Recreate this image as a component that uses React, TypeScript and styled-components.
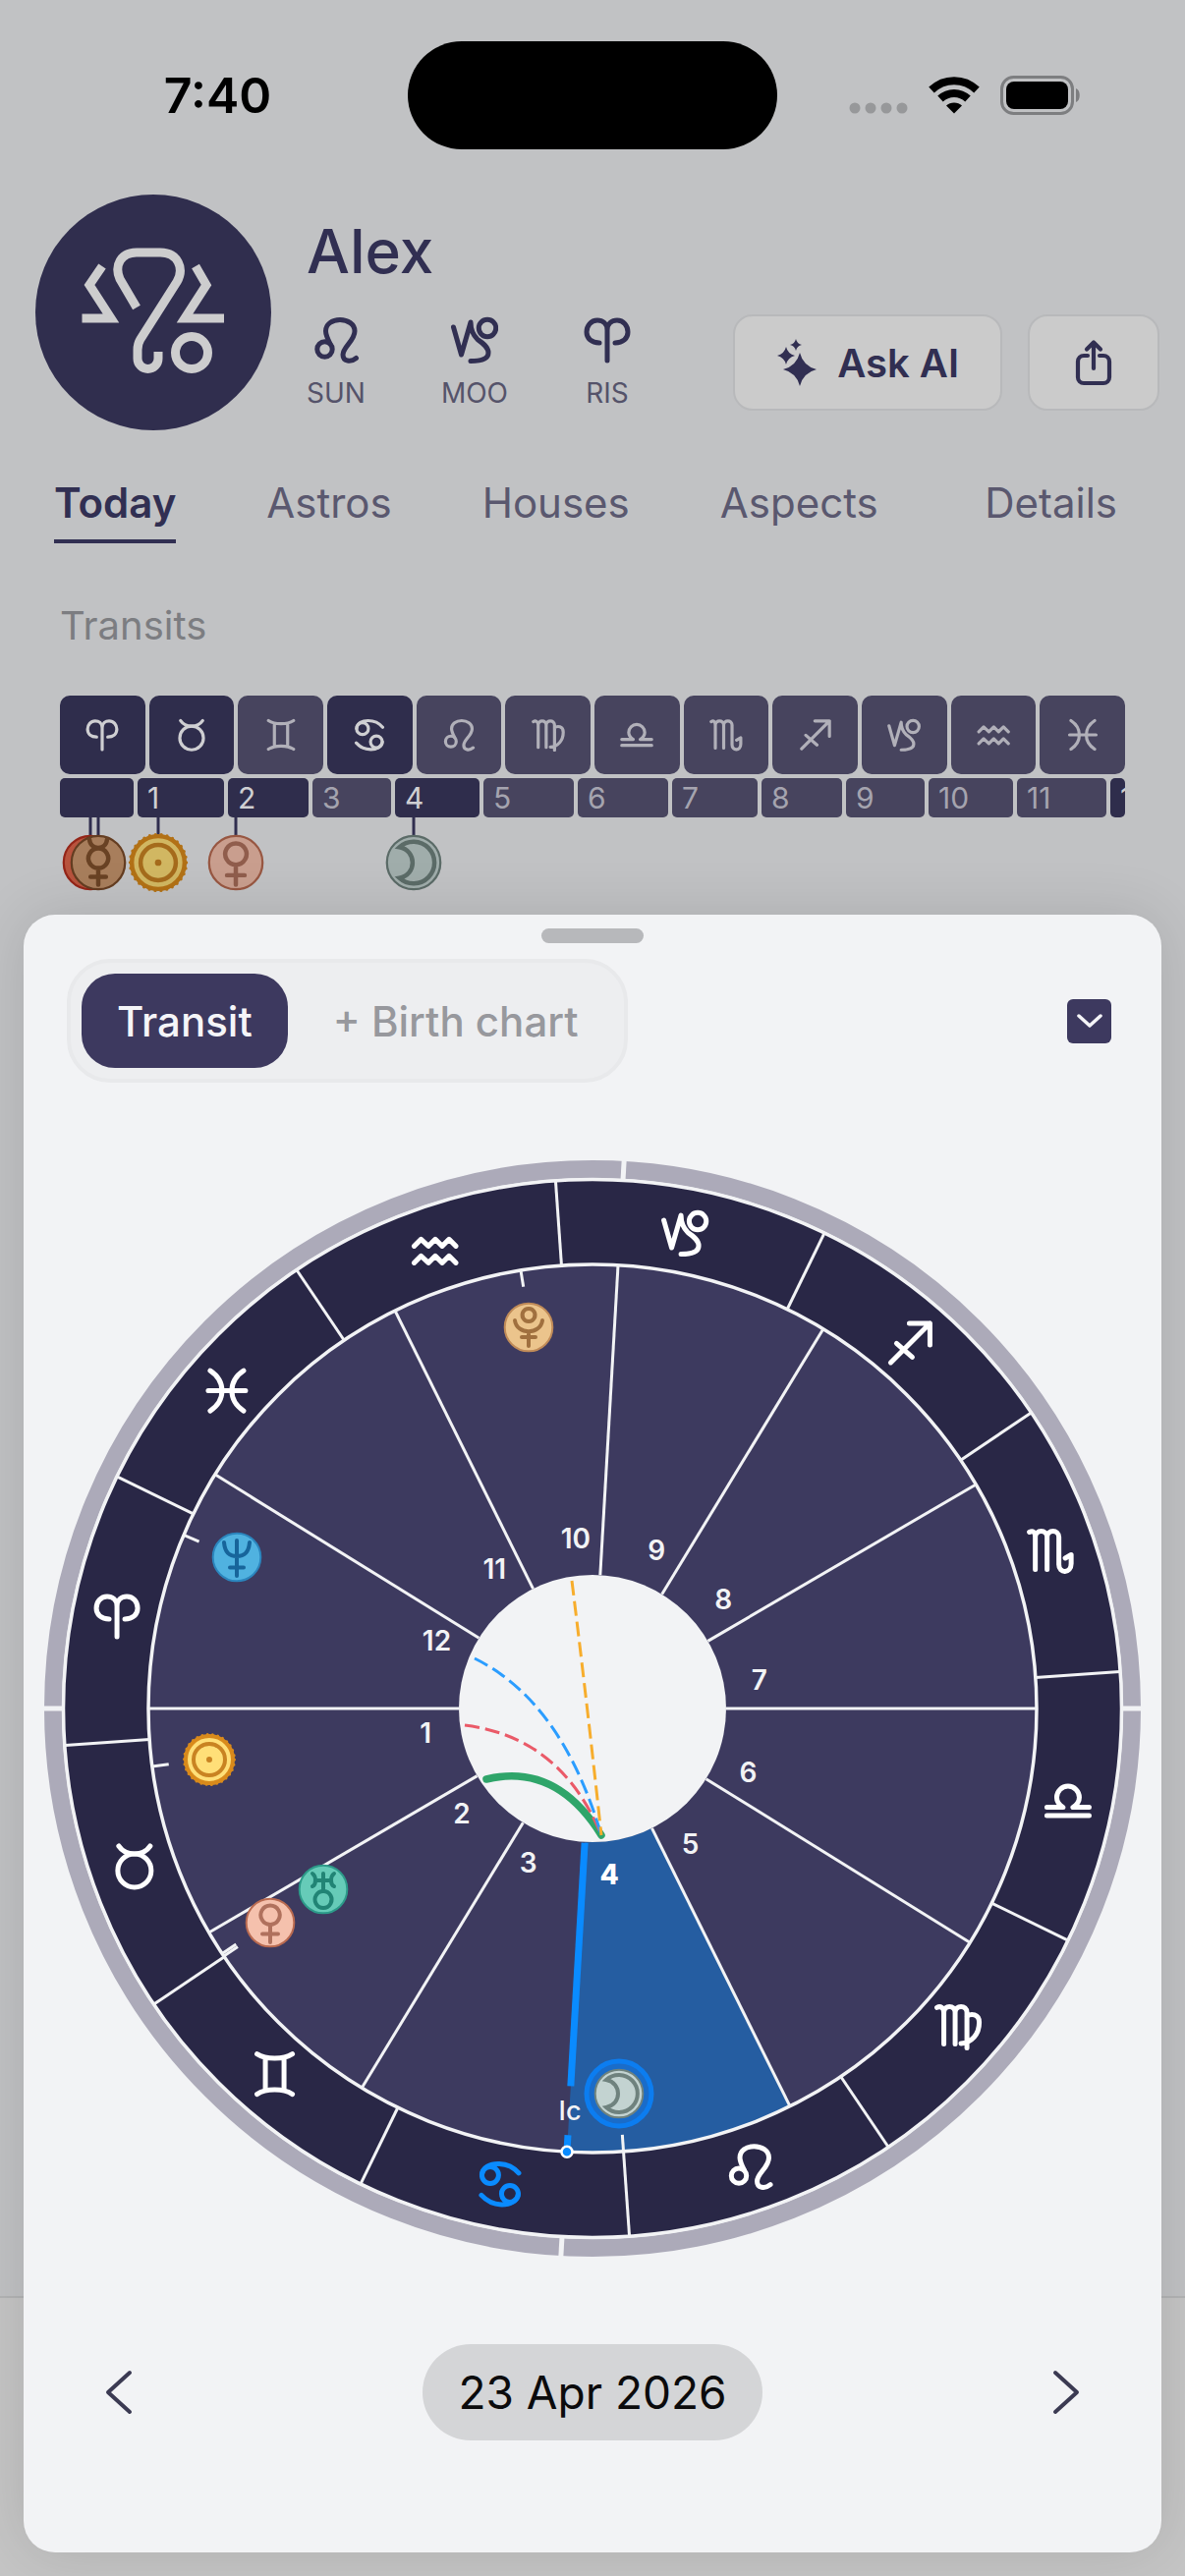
import React from 'react';
import styled, { createGlobalStyle } from 'styled-components';

const GlobalStyle = createGlobalStyle`
  *, *::before, *::after { box-sizing: border-box; }
  body {
    margin: 0;
    background: #c1c2c4;
    font-family: Inter, "Liberation Sans", sans-serif;
    color: #312f52;
  }
  button {
    font: inherit;
    color: inherit;
    margin: 0;
    padding: 0;
    border: 0;
    background: none;
    cursor: pointer;
  }
  svg { display: block; }
`;

/* ---------- zodiac glyphs, drawn in a 48 unit box ---------- */

type Sign =
  | 'aries' | 'taurus' | 'gemini' | 'cancer' | 'leo' | 'virgo'
  | 'libra' | 'scorpio' | 'sagittarius' | 'capricorn' | 'aquarius' | 'pisces';

const SIGNS: Sign[] = [
  'aries', 'taurus', 'gemini', 'cancer', 'leo', 'virgo',
  'libra', 'scorpio', 'sagittarius', 'capricorn', 'aquarius', 'pisces',
];

const GLYPHS: Record<Sign, React.ReactNode> = {
  aries: (
    <path d="M24 45V14C24 7 19 4 14 4 7.500 4 3 9.500 3 16c0 6.500 5 11 13 11M24 14C24 7 29 4 34 4c6.500 0 11 5.500 11 12 0 6.500-5 11-13 11" />
  ),
  taurus: (
    <>
      <circle cx="24" cy="28.500" r="17" />
      <path d="M8 3.500C12 9.500 17 11.500 24 11.500S36 9.500 40 3.500" />
    </>
  ),
  gemini: (
    <path d="M6 3.500C12 7.500 18 8 24 8S36 7.500 42 3.500M6 44.500C12 40.500 18 40 24 40S36 40.500 42 44.500M14.500 8V40M33.500 8V40" />
  ),
  cancer: (
    <>
      <circle cx="14" cy="15" r="8.500" />
      <circle cx="34" cy="34" r="8.500" />
      <path d="M5.500 15C6 7 14 3.500 22 3.500 31 3.500 38 7 43 13M42.500 34C42 41 34 45 26 45 17 45 10 41 5 35.500" />
    </>
  ),
  leo: (
    <>
      <circle cx="12.500" cy="33.500" r="7.700" />
      <path d="M18 28C15.500 23 13.500 19 13.500 15 13.500 8 20 3.500 28 3.500S43 8 43 15C43 25 31 31 31 39 31 46 39 47 44.500 42.500" />
    </>
  ),
  virgo: (
    <path d="M2.500 5C6 3 9.500 5 9.500 10V42M9.500 10C9.500 2 21 2 21 10V42M21 10C21 2 33 2 33 10V46M33 14C37 10.500 45.500 11.500 45.500 20 45.500 32 38 40.500 27 41.500" />
  ),
  libra: (
    <path d="M2.500 39H45.500M2.500 30.500H19C15 28 12.500 25 12.500 20.500a11.500 11.500 0 0 1 23 0C35.500 25 33 28 29 30.500H45.500" />
  ),
  scorpio: (
    <path d="M2.500 5C6 3 8.500 5 8.500 10V43M8.500 10C8.500 2 20.500 2 20.500 10V43M20.500 10C20.500 2 32.500 2 32.500 10V38C32.500 47.500 45 47.500 45 37V28L39 31.500" />
  ),
  sagittarius: <path d="M4 44L44 4M23 4H44V26M10 24.500L26 38.500" />,
  capricorn: (
    <>
      <circle cx="37" cy="12" r="8.700" />
      <path d="M2.500 11L10.500 39L20 6C20 14 22.500 19 27 23.500 32 27 38 31 38 37 38 43 31 45.500 20 45.500" />
    </>
  ),
  aquarius: (
    <path d="M3 19.500L10 12.500L17.500 19.500L24.500 12.500L31.500 19.500L38.500 12.500L45.500 19.500M3 36.500L10 29.500L17.500 36.500L24.500 29.500L31.500 36.500L38.500 29.500L45.500 36.500" />
  ),
  pisces: <path d="M7 3.500C23 14 23 34 7 44.500M41 3.500C25 14 25 34 41 44.500M5 24H43" />,
};

function SignIcon({ sign, size, weight = 4.5 }: { sign: Sign; size: number; weight?: number }) {
  return (
    <svg
      width={size}
      height={size}
      viewBox="0 0 48 48"
      fill="none"
      stroke="currentColor"
      strokeWidth={weight}
      strokeLinecap="round"
      strokeLinejoin="round"
      aria-hidden="true"
    >
      {GLYPHS[sign]}
    </svg>
  );
}

/* ---------- planet medallions, centred on 0,0 with radius 25 ---------- */

type Planet = 'sun' | 'moon' | 'mercury' | 'venus' | 'mars' | 'uranus' | 'neptune' | 'pluto';

const PLANETS: Record<Planet, { fill: string; rim: string; ink: string; glyph: React.ReactNode }> = {
  sun: {
    fill: '#ffdf78', rim: '#d98a1b', ink: '#c98322',
    glyph: (
      <>
        <circle r="24" strokeWidth="4" stroke="#d98a1b" />
        <circle r="25.500" strokeWidth="3" stroke="#d98a1b" strokeDasharray="0 5.340" />
        <circle r="16" />
        <circle r="1.500" strokeWidth="3" />
      </>
    ),
  },
  moon: {
    fill: '#c3d3d1', rim: '#6f827e', ink: '#6f827e',
    glyph: <path d="M-13-14A19 19 0 1 1-13 14C3 11 3-11-13-14Z" />,
  },
  mercury: {
    fill: '#cd9a70', rim: '#7a4a28', ink: '#80502c',
    glyph: <path d="M-8-21C-7-11 7-11 8-21M0 5V20M-7 13H7M0-13a9 9 0 1 0 .1 0Z" />,
  },
  venus: {
    fill: '#f5c1ad', rim: '#b96a50', ink: '#b0715d',
    glyph: <path d="M0 2V20M-8 11.500H8M0-17.500a9.700 9.700 0 1 0 .1 0Z" />,
  },
  mars: { fill: '#e0654a', rim: '#b52d1d', ink: '#b52d1d', glyph: null },
  uranus: {
    fill: '#66cbb8', rim: '#2c9a89', ink: '#218475',
    glyph: <path d="M0 2a8.500 8.500 0 1 0 .1 0ZM0-16V2M-11-16C-7-13-7-5-11-3M11-16C7-13 7-5 11-3M-8-9H8" />,
  },
  neptune: {
    fill: '#50b2e0', rim: '#2b85bd', ink: '#17659b',
    glyph: <path d="M0-17V19M-7 10.500H7M-13-15C-12-3-6-1 0-1S12-3 13-15" />,
  },
  pluto: {
    fill: '#ebc48c', rim: '#c08b58', ink: '#a0703f',
    glyph: <path d="M0-19a6.500 6.500 0 1 0 .1 0ZM-14-7C-12 8 12 8 14-7M0 5V19M-7 10H7" />,
  },
};

function Medallion({ planet }: { planet: Planet }) {
  const p = PLANETS[planet];
  return (
    <g fill="none" stroke={p.ink} strokeWidth="4" strokeLinecap="round">
      <circle r="24.300" fill={p.fill} stroke={p.rim} strokeWidth="2" />
      {p.glyph}
    </g>
  );
}

/* ---------- screen behind the sheet ---------- */

const Screen = styled.div`
  position: relative;
  display: flex;
  flex-direction: column;
  min-height: 100vh;
  overflow: hidden;
`;

const StatusBar = styled.div`
  display: grid;
  grid-template-columns: 1fr 376px 1fr;
  align-items: center;
  height: 194px;
`;

const Clock = styled.time`
  padding-left: 28px;
  text-align: center;
  font-size: 50px;
  line-height: 60px;
  font-weight: 600;
  color: #000;
`;

const Island = styled.div`
  height: 110px;
  border-radius: 55px;
  background: #000;
`;

const StatusIcons = styled.div`
  display: flex;
  align-items: center;
  justify-content: center;
  gap: 21px;
  padding-right: 32px;
  color: #000;
`;

const Profile = styled.header`
  display: flex;
  gap: 36px;
  padding: 4px 26px 0 36px;
`;

const Avatar = styled.div`
  flex: none;
  width: 240px;
  height: 240px;
  border-radius: 50%;
  background: #302e4e;
  color: #cdcdce;
`;

const Identity = styled.div`
  flex: 1;
  padding-top: 26px;
`;

const Name = styled.h1`
  margin: 0 0 34px;
  font-size: 62px;
  line-height: 64px;
  font-weight: 500;
`;

const Placements = styled.ul`
  display: flex;
  gap: 77px;
  margin: 0;
  padding: 0;
  list-style: none;
`;

const Placement = styled.li`
  display: flex;
  flex-direction: column;
  align-items: center;
  gap: 14px;
  font-size: 28px;
  line-height: 32px;
  color: #55536a;

  svg { color: #312f52; }
`;

const Actions = styled.div`
  display: flex;
  align-self: flex-end;
  gap: 26px;
  padding-bottom: 20px;
`;

const ActionButton = styled.button`
  display: flex;
  align-items: center;
  justify-content: center;
  gap: 20px;
  min-width: 134px;
  height: 98px;
  padding: 0 42px;
  border: 2px solid #b8b9bb;
  border-radius: 20px;
  background: #cbcbcb;
  font-size: 40px;
  font-weight: 600;
`;

const Tabs = styled.nav`
  display: flex;
  gap: 92px;
  padding: 50px 69px 0 55px;
`;

const Tab = styled.button<{ $active?: boolean }>`
  padding-bottom: 13px;
  border-bottom: 4px solid ${(p) => (p.$active ? '#312f52' : 'transparent')};
  font-size: 42px;
  line-height: 48px;
  font-weight: ${(p) => (p.$active ? 600 : 400)};
  color: ${(p) => (p.$active ? '#312f52' : '#5a586f')};

  &:last-child { margin-left: auto; }
`;

const Transits = styled.section`
  flex: 1;
  padding: 60px 61px 0 61px;
`;

const SectionTitle = styled.h2`
  margin: 0 0 47px;
  font-size: 40px;
  line-height: 48px;
  font-weight: 400;
  color: #7c7d81;
`;

const Strip = styled.div`
  display: flex;
  gap: 4px;
  margin-bottom: 4px;
`;

const SignCell = styled.div<{ $active: boolean }>`
  display: flex;
  flex: 1;
  align-items: center;
  justify-content: center;
  height: 80px;
  border-radius: 10px;
  background: ${(p) => (p.$active ? '#2f2d4c' : '#47445e')};
  color: ${(p) => (p.$active ? '#cfcfd2' : '#b1b0b9')};
`;

const HouseCell = styled.div<{ $active: boolean; $span: number }>`
  flex: ${(p) => p.$span} 1 0;
  min-width: 0;
  height: 40px;
  overflow: hidden;
  border-radius: 5px;
  background: ${(p) => (p.$active ? '#2f2d4c' : '#47445e')};
  color: ${(p) => (p.$active ? '#cfcfd2' : '#a5a4af')};
  font-size: 30px;
  line-height: 40px;
  text-indent: 10px;
  white-space: nowrap;
`;

const Pins = styled.div`
  position: relative;
  height: 78px;
  margin-top: -4px;
`;

const Pin = styled.div<{ $at: number }>`
  position: absolute;
  top: 0;
  left: ${(p) => p.$at}%;
  transform: translateX(-50%);
  filter: brightness(0.82);
`;

const BottomBar = styled.footer`
  height: 285px;
  border-top: 2px solid #b3b4b5;
  background: #c5c5c5;
`;

/* ---------- sheet ---------- */

const Sheet = styled.section`
  position: absolute;
  left: 24px;
  right: 24px;
  bottom: 24px;
  display: flex;
  flex-direction: column;
  padding: 14px 20px 114px;
  border-radius: 32px;
  background: #f2f3f5;
  box-shadow: 0 0 60px rgba(0, 0, 0, 0.12);
`;

const Grabber = styled.div`
  align-self: center;
  width: 104px;
  height: 15px;
  border-radius: 8px;
  background: #b7b8bb;
`;

const SheetTop = styled.div`
  display: flex;
  align-items: center;
  justify-content: space-between;
  margin: 16px 0 79px;
  padding: 0 31px 0 24px;
`;

const Segments = styled.div`
  display: flex;
  padding: 11px;
  border: 4px solid #e8e9eb;
  border-radius: 44px;
  background: #edeef0;
`;

const Segment = styled.button<{ $active?: boolean }>`
  height: 96px;
  padding: 0 36px 0 ${(p) => (p.$active ? 36 : 46)}px;
  border-radius: 34px;
  background: ${(p) => (p.$active ? '#3d395f' : 'transparent')};
  color: ${(p) => (p.$active ? '#f5f5f8' : '#97989d')};
  font-size: 42px;
  font-weight: 500;
`;

const Collapse = styled.button`
  display: flex;
  align-items: center;
  justify-content: center;
  width: 45px;
  height: 45px;
  border-radius: 6px;
  background: #3d395f;
  color: #f5f5f8;
`;

const Wheel = styled.svg`
  width: 100%;
  height: auto;
  font-family: Inter, "Liberation Sans", sans-serif;
`;

const DateBar = styled.div`
  display: flex;
  align-items: center;
  justify-content: space-between;
  margin-top: 89px;
  padding: 0 45px;
  color: #3b3a52;
`;

const StepButton = styled.button`
  display: flex;
  align-items: center;
  justify-content: center;
  width: 64px;
  height: 96px;
`;

const DateButton = styled.button`
  height: 98px;
  padding: 0 36px;
  border-radius: 49px;
  background: #d4d5d7;
  color: #0b0b0c;
  font-size: 46px;
`;

/* ---------- wheel geometry: angles run anticlockwise from the ascendant ---------- */

const polar = (deg: number, r: number): [number, number] => {
  const a = (deg * Math.PI) / 180;
  return [-r * Math.cos(a), r * Math.sin(a)];
};

function Ray({ at, from, to, ...rest }: { at: number; from: number; to: number } & React.SVGProps<SVGLineElement>) {
  const [x1, y1] = polar(at, from);
  const [x2, y2] = polar(at, to);
  return <line x1={x1} y1={y1} x2={x2} y2={y2} {...rest} />;
}

const PAPER = '#f2f3f5';
const CUSPS = [0, 30.3, 58.7, 86.7, 116.4, 148.2, 180, 210.3, 238.7, 266.7, 296.4, 328.2];
const FIRST_SIGN = -26;
const HUB = 136;
const RIM = 452;

const WHEEL_PLANETS: { planet: Planet; x: number; y: number; tick: number }[] = [
  { planet: 'pluto', x: -65, y: -388, tick: 279.3 },
  { planet: 'neptune', x: -362, y: -154, tick: 337 },
  { planet: 'sun', x: -390, y: 52, tick: 7.5 },
  { planet: 'uranus', x: -274, y: 184, tick: 33.9 },
  { planet: 'venus', x: -328, y: 218, tick: 33.5 },
  { planet: 'moon', x: 27, y: 392, tick: 94 },
];

function sector(from: number, to: number) {
  const [ax, ay] = polar(from, HUB);
  const [bx, by] = polar(from, RIM);
  const [cx, cy] = polar(to, RIM);
  const [dx, dy] = polar(to, HUB);
  return `M${ax} ${ay}L${bx} ${by}A${RIM} ${RIM} 0 0 0 ${cx} ${cy}L${dx} ${dy}A${HUB} ${HUB} 0 0 1 ${ax} ${ay}Z`;
}

function TransitWheel() {
  return (
    <Wheel viewBox="-559 -558 1118 1116" role="img" aria-label="Transit chart">
      <circle r="549" fill="none" stroke="#acaab9" strokeWidth="18" />
      {[0, 86.7, 180, 266.7].map((a) => (
        <Ray key={a} at={a} from={538} to={560} stroke={PAPER} strokeWidth="5" />
      ))}
      <circle r="538.500" fill="#292746" stroke={PAPER} strokeWidth="3.500" />
      {SIGNS.map((s, i) => (
        <Ray key={s} at={FIRST_SIGN + i * 30} from={RIM} to={538} stroke={PAPER} strokeWidth="3" />
      ))}
      <circle r={RIM} fill="#3d3a5f" />
      <path d={sector(CUSPS[3], CUSPS[4])} fill="#255da1" />
      <circle r={RIM} fill="none" stroke={PAPER} strokeWidth="3.500" />
      {CUSPS.map((a, i) =>
        i === 3 ? null : <Ray key={a} at={a} from={HUB} to={RIM} stroke={PAPER} strokeWidth="3" />,
      )}
      <circle r={HUB} fill={PAPER} />

      {SIGNS.map((s, i) => {
        const [x, y] = polar(FIRST_SIGN + 15 + i * 30, 493);
        return (
          <g
            key={s}
            transform={`translate(${x - 24} ${y - 24})`}
            fill="none"
            stroke={s === 'cancer' ? '#0a8bff' : '#ffffff'}
            strokeWidth="5"
            strokeLinecap="round"
            strokeLinejoin="round"
          >
            {GLYPHS[s]}
          </g>
        );
      })}

      {CUSPS.map((a, i) => {
        const [x, y] = polar(a + 9, 172);
        return (
          <text
            key={a}
            x={x}
            y={y + 8}
            textAnchor="middle"
            fontSize="28"
            fontWeight={i === 3 ? 800 : 600}
            fill={i === 3 ? '#ffffff' : PAPER}
          >
            {i + 1}
          </text>
        );
      })}

      <g fill="none" strokeLinecap="round">
        <path d="M-108 72Q-37 55 9 129" stroke="#2fa56a" strokeWidth="7.500" />
        <path d="M-130 17Q-32 29 9 129" stroke="#ea5a68" strokeWidth="3" strokeDasharray="15 6" strokeLinecap="butt" />
        <path d="M-120-51Q-31-7 9 129" stroke="#2b9dff" strokeWidth="3" strokeDasharray="15 6" strokeLinecap="butt" />
        <path d="M-21-130Q-5-1 9 129" stroke="#f7ad2c" strokeWidth="3" strokeDasharray="15 6" strokeLinecap="butt" />
      </g>

      <Ray at={86.7} from={137} to={385} stroke="#0a8bff" strokeWidth="7" />
      <Ray at={86.7} from={435} to={446} stroke="#0a8bff" strokeWidth="7" />
      <circle cx={polar(86.7, RIM)[0]} cy={polar(86.7, RIM)[1]} r="5.500" fill="#0a8bff" stroke="#ffffff" strokeWidth="2.500" />
      <text x="-23" y="419" textAnchor="middle" fontSize="27" fontWeight="500" fill={PAPER}>Ic</text>

      {WHEEL_PLANETS.map((p) => (
        <g key={p.planet}>
          <Ray at={p.tick} from={435} to={RIM} stroke={PAPER} strokeWidth="3" />
          <g transform={`translate(${p.x} ${p.y})`}>
            {p.planet === 'moon' && <circle r="33" fill="#1a6cc9" stroke="#0c7df0" strokeWidth="5" />}
            <Medallion planet={p.planet} />
          </g>
        </g>
      ))}
    </Wheel>
  );
}

/* ---------- data for the transit strip ---------- */

const HOUSES = [
  { label: '', span: 75, active: true },
  { label: '1', span: 88, active: true },
  { label: '2', span: 82, active: true },
  { label: '3', span: 80, active: false },
  { label: '4', span: 86, active: true },
  { label: '5', span: 92, active: false },
  { label: '6', span: 92, active: false },
  { label: '7', span: 87, active: false },
  { label: '8', span: 82, active: false },
  { label: '9', span: 80, active: false },
  { label: '10', span: 86, active: false },
  { label: '11', span: 91, active: false },
  { label: '12', span: 15, active: true },
];

const ACTIVE_SIGNS: Sign[] = ['aries', 'taurus', 'cancer'];

const PINS: { planet: Planet; at: number }[] = [
  { planet: 'mars', at: 2.9 },
  { planet: 'mercury', at: 3.6 },
  { planet: 'sun', at: 9.2 },
  { planet: 'venus', at: 16.5 },
  { planet: 'moon', at: 33.2 },
];

const PLACEMENTS: { sign: Sign; label: string }[] = [
  { sign: 'leo', label: 'SUN' },
  { sign: 'capricorn', label: 'MOO' },
  { sign: 'aries', label: 'RIS' },
];

const star = (x: number, y: number, r: number) => {
  const k = r * 0.2;
  return `M${x} ${y - r}Q${x + k} ${y - k} ${x + r} ${y}Q${x + k} ${y + k} ${x} ${y + r}Q${x - k} ${y + k} ${x - r} ${y}Q${x - k} ${y - k} ${x} ${y - r}Z`;
};

export default function App() {
  return (
    <>
      <GlobalStyle />
      <Screen>
        <StatusBar>
          <Clock>7:40</Clock>
          <Island />
          <StatusIcons>
            <svg width="60" height="40" viewBox="0 0 60 40" fill="#97989a" aria-hidden="true">
              {[6, 22, 38, 54].map((x) => <circle key={x} cx={x} cy="33" r="5.500" />)}
            </svg>
            <svg width="52" height="38" viewBox="0 0 52 38" fill="none" stroke="#000" aria-hidden="true">
              <path d="M3 13.500C16 1 36 1 49 13.500" strokeWidth="8" />
              <path d="M12 22.500C20 15 32 15 40 22.500" strokeWidth="8" />
              <path d="M18 29.500C22 25.500 30 25.500 34 29.500L26 37.500Z" fill="#000" stroke="none" />
            </svg>
            <svg width="84" height="40" viewBox="0 0 84 40" aria-hidden="true">
              <rect x="1.500" y="1.500" width="72" height="37" rx="12" fill="none" stroke="#7d7e80" strokeWidth="3" />
              <rect x="6" y="6" width="63" height="28" rx="8" fill="#000" />
              <path d="M77 13c5 1.500 5 12.500 0 14Z" fill="#7d7e80" />
            </svg>
          </StatusIcons>
        </StatusBar>

        <Profile>
          <Avatar>
            <svg width="240" height="240" viewBox="0 0 240 240" fill="none" stroke="currentColor" strokeWidth="9" aria-hidden="true">
              <path d="M68 73L55 92L77 126H47.500M163 73L174 92L152 126H192" />
              <path d="M103 115L86 86C80 72 87 59 103 59H127C145 59 152 75 144 89L107 147Q104 152 104 158V167a10.500 10.500 0 0 0 21 0V160" />
              <circle cx="159" cy="161" r="16.500" />
            </svg>
          </Avatar>
          <Identity>
            <Name>Alex</Name>
            <Placements>
              {PLACEMENTS.map((p) => (
                <Placement key={p.label}>
                  <SignIcon sign={p.sign} size={48} weight={5} />
                  {p.label}
                </Placement>
              ))}
            </Placements>
          </Identity>
          <Actions>
            <ActionButton type="button">
              <svg width="42" height="48" viewBox="0 0 42 48" fill="currentColor" aria-hidden="true">
                <path d={star(24, 31, 17)} />
                <path d={star(10, 17, 9)} />
                <path d={star(20, 6, 6)} />
              </svg>
              Ask AI
            </ActionButton>
            <ActionButton type="button" aria-label="Share">
              <svg width="38" height="48" viewBox="-1 0 38 48" fill="none" stroke="currentColor" strokeWidth="4.200" strokeLinecap="round" strokeLinejoin="round" aria-hidden="true">
                <path d="M12 17H8a6 6 0 0 0-6 6v16a6 6 0 0 0 6 6h20a6 6 0 0 0 6-6V23a6 6 0 0 0-6-6h-4M18 30V4M11 10.500l7-7 7 7" />
              </svg>
            </ActionButton>
          </Actions>
        </Profile>

        <Tabs>
          <Tab type="button" $active>Today</Tab>
          <Tab type="button">Astros</Tab>
          <Tab type="button">Houses</Tab>
          <Tab type="button">Aspects</Tab>
          <Tab type="button">Details</Tab>
        </Tabs>

        <Transits>
          <SectionTitle>Transits</SectionTitle>
          <Strip>
            {SIGNS.map((s) => (
              <SignCell key={s} $active={ACTIVE_SIGNS.includes(s)}>
                <SignIcon sign={s} size={34} />
              </SignCell>
            ))}
          </Strip>
          <Strip>
            {HOUSES.map((h) => (
              <HouseCell key={h.label} $active={h.active} $span={h.span}>{h.label}</HouseCell>
            ))}
          </Strip>
          <Pins>
            {PINS.map((p) => (
              <Pin key={p.planet} $at={p.at}>
                <svg width="64" height="78" viewBox="-32 -46 64 78" aria-hidden="true">
                  <line y1="-46" y2="-26" stroke="#3a3860" strokeWidth="3" />
                  <g transform="scale(1.120)"><Medallion planet={p.planet} /></g>
                </svg>
              </Pin>
            ))}
          </Pins>
        </Transits>

        <BottomBar />

        <Sheet>
          <Grabber />
          <SheetTop>
            <Segments>
              <Segment type="button" $active>Transit</Segment>
              <Segment type="button">+ Birth chart</Segment>
            </Segments>
            <Collapse type="button" aria-label="Collapse">
              <svg width="26" height="16" viewBox="0 0 26 16" fill="none" stroke="currentColor" strokeWidth="3.500" strokeLinecap="round" strokeLinejoin="round" aria-hidden="true">
                <path d="M2 3L13 13L24 3" />
              </svg>
            </Collapse>
          </SheetTop>
          <TransitWheel />
          <DateBar>
            <StepButton type="button" aria-label="Previous day">
              <svg width="28" height="46" viewBox="0 0 28 46" fill="none" stroke="currentColor" strokeWidth="4" strokeLinecap="round" strokeLinejoin="round" aria-hidden="true">
                <path d="M25 3L3 23L25 43" />
              </svg>
            </StepButton>
            <DateButton type="button">23 Apr 2026</DateButton>
            <StepButton type="button" aria-label="Next day">
              <svg width="28" height="46" viewBox="0 0 28 46" fill="none" stroke="currentColor" strokeWidth="4" strokeLinecap="round" strokeLinejoin="round" aria-hidden="true">
                <path d="M3 3L25 23L3 43" />
              </svg>
            </StepButton>
          </DateBar>
        </Sheet>
      </Screen>
    </>
  );
}
